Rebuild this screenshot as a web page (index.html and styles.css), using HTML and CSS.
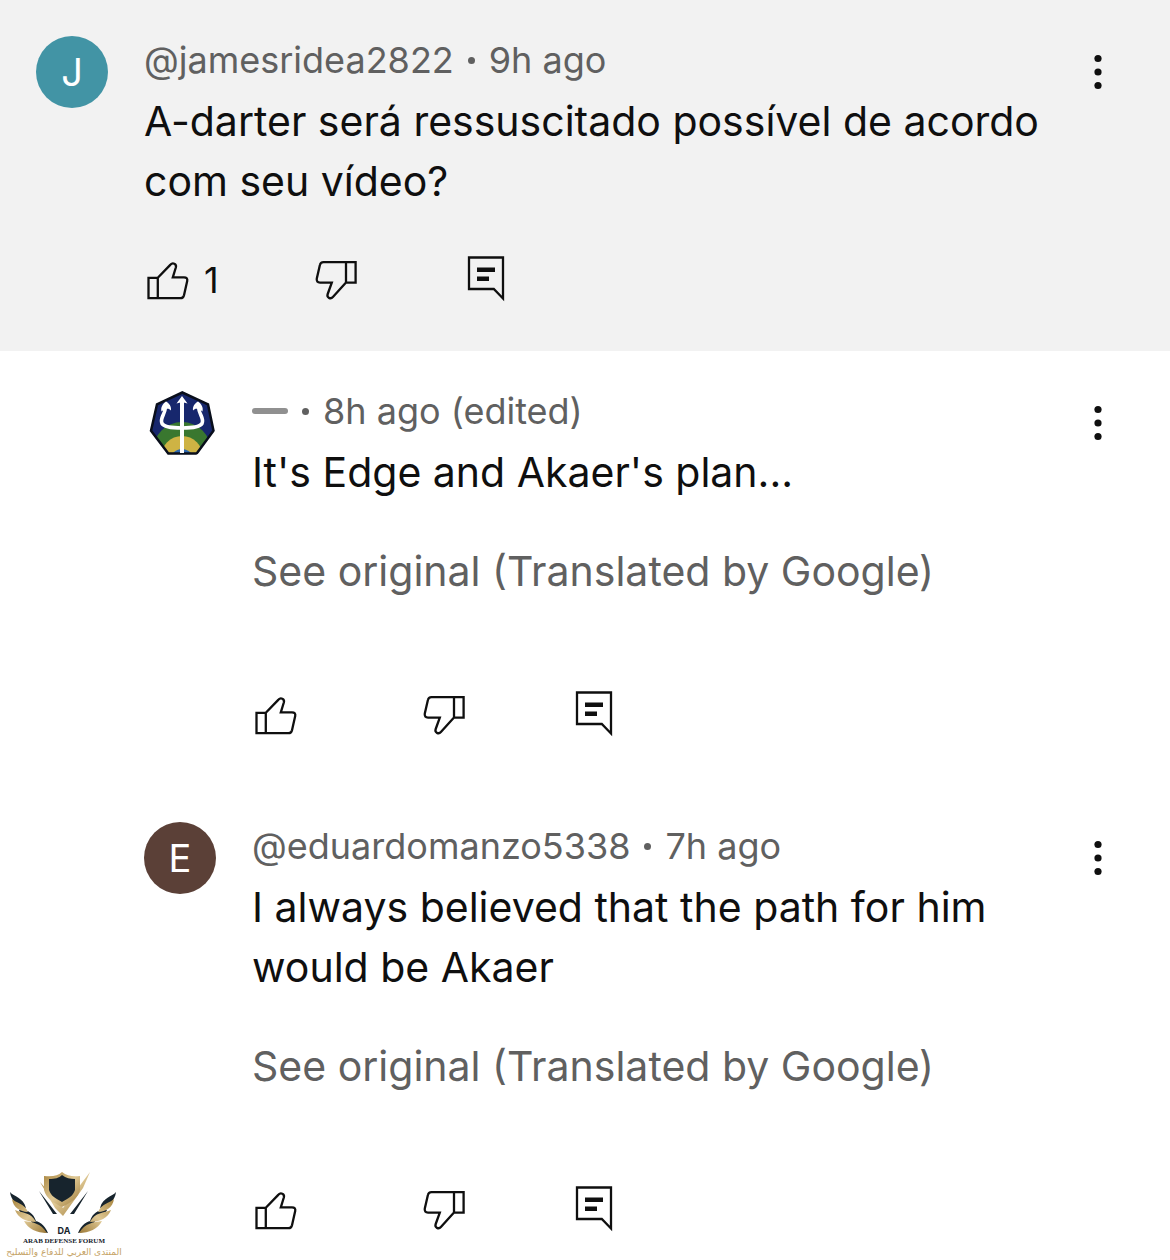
FILE: index.html
```html
<!DOCTYPE html>
<html lang="en">
<head>
<meta charset="utf-8">
<meta name="viewport" content="width=device-width, initial-scale=1">
<title>Comments</title>
<link rel="stylesheet" href="styles.css">
</head>
<body>
<svg class="sprite" aria-hidden="true">
  <symbol id="like" viewBox="0 0 48 48"><path d="M4.500 21.800h9.300v20.400H4.500zM13.800 21.800 26.500 8.600c1-1.100 2.500-1.500 3.800-.9 1.500.7 2 2.100 1.600 3.600L28.800 21.300H40c2.500 0 3.700 1.500 3.200 3.700L40 39.200c-.5 2-1.500 3-3.500 3H13.800"/></symbol>
  <symbol id="dislike" viewBox="0 0 48 48"><path d="M34 6.200h9.600v20.400H34zM34 6.200H11.500c-2 0-3.200.9-3.600 2.900L4.800 22.600c-.5 2.500.7 4 3.200 4h11.800L15.700 38c-.6 1.700 0 3.200 1.300 3.900 1.400.7 2.900.3 3.900-.8L34 26.600"/></symbol>
  <symbol id="reply" viewBox="0 0 48 48"><path d="M5 1.500h34v41L29.800 33H5z"/><path class="solid" d="M13 11.500h18v4.500H13zM13 20.500h12V25H13z"/></symbol>
  <symbol id="more" viewBox="0 0 24 48"><g class="solid"><circle cx="12" cy="10.500" r="3.600"/><circle cx="12" cy="24" r="3.600"/><circle cx="12" cy="37.500" r="3.600"/></g></symbol>
</svg>
<main class="thread">
  <article class="comment parent">
    <div class="avatar teal">J</div>
    <div class="content">
      <header class="meta"><span>@jamesridea2822</span><i class="dot"></i><span>9h ago</span></header>
      <p class="text">A-darter será ressuscitado possível de acordo com seu vídeo?</p>
      <div class="actions">
        <button class="like" aria-label="Like, 1"><svg class="icon"><use href="#like"/></svg><span>1</span></button>
        <button class="dislike" aria-label="Dislike"><svg class="icon"><use href="#dislike"/></svg></button>
        <button aria-label="Reply"><svg class="icon"><use href="#reply"/></svg></button>
      </div>
    </div>
    <button class="more" aria-label="More options"><svg class="icon"><use href="#more"/></svg></button>
  </article>

  <article class="comment child">
    <svg class="avatar" viewBox="0 0 72 72" role="img" aria-label="Trident emblem">
      <defs><clipPath id="badge"><path d="M38.300 5 64.300 17 70 43.700 53 67H24L6.500 43.700 12.700 17z"/></clipPath></defs>
      <g clip-path="url(#badge)">
        <path fill="#17276d" d="M0 0h72v72H0z"/>
        <circle cx="38" cy="64" r="29" fill="#39772f"/>
        <circle cx="38" cy="70" r="21" fill="#ceb344"/>
        <circle cx="38" cy="74" r="12" fill="#2c67ae"/>
      </g>
      <path fill="none" stroke="#090e1b" stroke-width="2.500" d="M38.300 5.500 64 17.300 69.500 43.700 52.700 66.500H24.300L7 43.700 13 17.300z"/>
      <path fill="none" stroke="#fff" stroke-width="4" d="M38 66V14"/>
      <path fill="none" stroke="#fff" stroke-width="3.600" d="M21.500 20c-.5 8-6 11-3.500 16.500 2 3.500 10 4.500 20 4.500s18-1 20-4.500C60.500 31 55 28 54.500 20"/>
      <path fill="#fff" d="m38 9 5.500 7.500-5.500-1.500-5.500 1.500zM22 14.500c3.500 2 5.500 5 5 9-1.500-1.500-3-2-4.500-1.500-2 0-3 1-5 2.500-1-4 1-7.500 4.500-10zM54 14.500c-3.500 2-5.500 5-5 9 1.500-1.500 3-2 4.500-1.500 2 0 3 1 5 2.500 1-4-1-7.500-4.500-10z"/>
    </svg>
    <div class="content">
      <header class="meta"><span class="dash" role="img" aria-label="Hidden name"></span><i class="dot"></i><span>8h ago (edited)</span></header>
      <p class="text">It's Edge and Akaer's plan...</p>
      <a class="original" href="#">See original (Translated by Google)</a>
      <div class="actions">
        <button class="like" aria-label="Like"><svg class="icon"><use href="#like"/></svg></button>
        <button class="dislike" aria-label="Dislike"><svg class="icon"><use href="#dislike"/></svg></button>
        <button aria-label="Reply"><svg class="icon"><use href="#reply"/></svg></button>
      </div>
    </div>
    <button class="more" aria-label="More options"><svg class="icon"><use href="#more"/></svg></button>
  </article>

  <article class="comment child">
    <div class="avatar brown">E</div>
    <div class="content">
      <header class="meta"><span>@eduardomanzo5338</span><i class="dot"></i><span>7h ago</span></header>
      <p class="text">I always believed that the path for him would be Akaer</p>
      <a class="original" href="#">See original (Translated by Google)</a>
      <div class="actions">
        <button class="like" aria-label="Like"><svg class="icon"><use href="#like"/></svg></button>
        <button class="dislike" aria-label="Dislike"><svg class="icon"><use href="#dislike"/></svg></button>
        <button aria-label="Reply"><svg class="icon"><use href="#reply"/></svg></button>
      </div>
    </div>
    <button class="more" aria-label="More options"><svg class="icon"><use href="#more"/></svg></button>
  </article>

  <aside class="watermark">
    <svg class="crest" viewBox="0 0 110 66" aria-hidden="true">
      <defs>
        <linearGradient id="gold" x2="1" y2="1"><stop stop-color="#a8853f"/><stop offset=".5" stop-color="#dfc894"/><stop offset="1" stop-color="#9b7836"/></linearGradient>
        <g id="wing">
          <path fill="#17242d" d="M1 20c4 5 13 5 16 16C9 34 2 29 1 20zM10 38c7-1 14 2 17 11-8-1-14-4-17-11zM22 49c7-1 13 3 17 12-8-1-14-5-17-12z"/>
          <path fill="url(#gold)" d="M3 27c4 4 12 4 16 13C11 40 4 35 3 27zM6 38c7 3 16 2 21 12-10 0-18-4-21-12zM15 49c8 1 17 2 23 12-10 0-19-4-23-12z"/>
        </g>
      </defs>
      <path fill="#17242d" d="m30 19 14 23h4zM79 19 65 42h-4z"/>
      <path fill="url(#gold)" d="M31 10 54 36 81 0 74 16 54 44 46 36z"/>
      <path fill="url(#gold)" d="M35 4c8 1 14 0 18-4 5 4 11 5 18 4v14c-2 8-8 12-18 17-10-5-16-9-18-17z"/>
      <path fill="#17242d" d="M40 7c6 0 10-1 13-4 4 3 8 4 13 4v11c-2 6-6 8-13 12-7-4-11-6-13-12z"/>
      <use href="#wing"/><use href="#wing" transform="matrix(-1 0 0 1 108 0)"/>
    </svg>
    <strong class="initials">DA</strong>
    <strong class="forum">ARAB DEFENSE FORUM</strong>
    <span class="arabic" lang="ar" dir="rtl">المنتدى العربي للدفاع والتسليح</span>
  </aside>
</main>
</body>
</html>
```

FILE: styles.css
```css
* { box-sizing: border-box; }

body {
  margin: 0;
  background: #fff;
  color: #0f0f0f;
  font-family: Inter, "Liberation Sans", sans-serif;
}

.sprite { position: absolute; width: 0; height: 0; }

.thread { position: relative; }

.comment {
  display: flex;
  align-items: flex-start;
  gap: 36px;
  padding: 36px 60px 47px 36px;
}

.parent { background: #f2f2f2; }
.child { padding-left: 144px; }
.child:nth-last-of-type(1) { padding-bottom: 26px; }

.avatar {
  display: flex;
  flex: none;
  align-items: center;
  justify-content: center;
  width: 72px;
  height: 72px;
  border-radius: 50%;
  color: #fff;
  font-size: 38px;
}

.teal { background: #4294a5; }
.brown { background: #5b4037; }

.content { flex: 1; min-width: 0; }

.meta {
  display: flex;
  align-items: center;
  gap: 14px;
  height: 48px;
  color: #606060;
  font-size: 36px;
}

.dot {
  width: 7px;
  height: 7px;
  border-radius: 50%;
  background: #606060;
}

.dash {
  width: 36px;
  height: 6px;
  border-radius: 3px;
  background: #909090;
}

.text,
.original {
  margin: 7px 0 0;
  font-size: 41px;
  line-height: 60px;
}

.original {
  display: block;
  margin-top: 39px;
  color: #606060;
  text-decoration: none;
}

.actions { display: flex; margin-top: 45px; }
.child .actions { margin-top: 90px; }

button {
  display: flex;
  align-items: center;
  padding: 0;
  border: 0;
  background: none;
  color: inherit;
  font: inherit;
  font-size: 36px;
  line-height: 48px;
  cursor: pointer;
}

.like { gap: 12px; width: 168px; }
.dislike { width: 152px; }

.icon {
  display: block;
  width: 48px;
  height: 48px;
  fill: none;
  stroke: #0f0f0f;
  stroke-width: 2.3;
}

.solid { fill: #0f0f0f; stroke: none; }

.more { margin-top: 12px; }
.more .icon { width: 24px; }

.watermark {
  position: absolute;
  bottom: 2px;
  left: 9px;
  display: flex;
  flex-direction: column;
  align-items: center;
  width: 110px;
  color: #17242d;
}

.crest { width: 110px; height: 66px; margin-bottom: -12px; }
.initials { font-size: 9px; line-height: 10px; }
.forum { font-family: "Liberation Serif", serif; font-size: 7px; line-height: 10px; white-space: nowrap; }
.arabic { color: #c5a366; font-family: "DejaVu Sans", sans-serif; font-size: 9px; line-height: 12px; white-space: nowrap; }
```
